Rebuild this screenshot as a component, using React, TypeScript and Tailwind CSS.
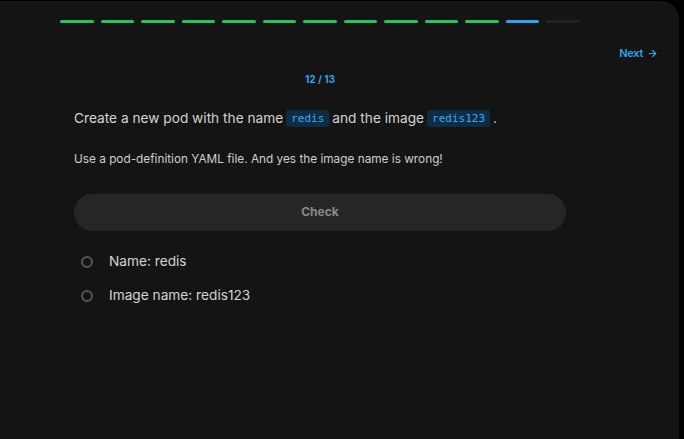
import React from "react";

const steps = ["done", "done", "done", "done", "done", "done", "done", "done", "done", "done", "done", "current", "todo"];

const Code = ({ children }: { children: React.ReactNode }) => (
  <span className="mx-[3px] px-[5px] py-[2px] rounded-[3px] bg-[#0d2d44] text-[#3fa9f5] text-[11px] font-['DejaVu_Sans_Mono',monospace] align-[1px]">
    {children}
  </span>
);

export default function App() {
  return (
    <div className="w-[684px] h-[439px] bg-black overflow-hidden font-['Inter',sans-serif]">
      <div className="w-[679px] h-[438px] mt-px bg-[#141414] rounded-tr-[18px]">
        <div className="w-[520px] ml-[60px] pt-[19px] flex gap-[7px]">
          {steps.map((s, i) => (
            <div
              key={i}
              className={
                "flex-1 h-[3px] rounded-full " +
                (s === "done" ? "bg-[#22c55e]" : s === "current" ? "bg-[#2ea3ee]" : "bg-[#222222]")
              }
            />
          ))}
        </div>

        <div className="flex justify-end pr-[21px] mt-[22px]">
          <button className="flex items-center gap-[4px] text-[#2ea3ee] text-[11px] font-semibold tracking-[-0.3px]">
            Next
            <svg width="11" height="11" viewBox="0 0 24 24" fill="none" stroke="currentColor" strokeWidth="2.5" strokeLinecap="round" strokeLinejoin="round">
              <path d="M5 12h14" />
              <path d="M12 5l7 7-7 7" />
            </svg>
          </button>
        </div>

        <div className="w-[520px] ml-[60px] mt-[10px] text-center text-[#2ea3ee] text-[10px] font-bold">
          12 / 13
        </div>

        <div className="w-[492px] ml-[74px] mt-[21px]">
          <p className="text-[13.7px] text-[#d4d4d4] leading-[20px]">
            Create a new pod with the name<Code>redis</Code>and the image<Code>redis123</Code>.
          </p>
          <p className="mt-[22px] text-[11.8px] text-[#cfcfcf] leading-[16px]">
            Use a pod-definition YAML file. And yes the image name is wrong!
          </p>

          <button className="mt-[27px] w-full h-[37px] rounded-full bg-[#262626] text-[#8a8a8a] text-[12px] font-bold">
            Check
          </button>

          <ul className="mt-[21px] flex flex-col gap-[14px]">
            {["Name: redis", "Image name: redis123"].map((t) => (
              <li key={t} className="flex items-center h-[20px]">
                <span className="ml-[7px] w-[12px] h-[12px] rounded-full border-[2px] border-[#555555]" />
                <span className="ml-[16px] text-[13.7px] text-[#d4d4d4]">{t}</span>
              </li>
            ))}
          </ul>
        </div>
      </div>
    </div>
  );
}
